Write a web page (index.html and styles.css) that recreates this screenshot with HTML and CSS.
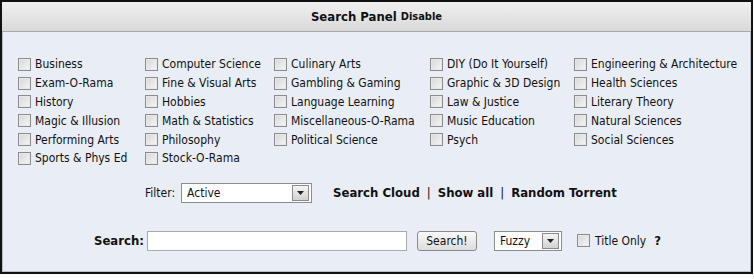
FILE: index.html
```html
<!DOCTYPE html>
<html>
<head>
<meta charset="utf-8">
<link rel="stylesheet" href="styles.css">
</head>
<body>
<div class="panel">
  <div class="panel-head"><span class="title">Search Panel</span> <span class="disable">Disable</span></div>
  <div class="panel-body">
    <div class="cats">
      <label class="cat"><span class="cb"></span>Business</label>
      <label class="cat"><span class="cb"></span>Computer Science</label>
      <label class="cat"><span class="cb"></span>Culinary Arts</label>
      <label class="cat"><span class="cb"></span>DIY (Do It Yourself)</label>
      <label class="cat"><span class="cb"></span>Engineering &amp; Architecture</label>
      <label class="cat"><span class="cb"></span>Exam-O-Rama</label>
      <label class="cat"><span class="cb"></span>Fine &amp; Visual Arts</label>
      <label class="cat"><span class="cb"></span>Gambling &amp; Gaming</label>
      <label class="cat"><span class="cb"></span>Graphic &amp; 3D Design</label>
      <label class="cat"><span class="cb"></span>Health Sciences</label>
      <label class="cat"><span class="cb"></span>History</label>
      <label class="cat"><span class="cb"></span>Hobbies</label>
      <label class="cat"><span class="cb"></span>Language Learning</label>
      <label class="cat"><span class="cb"></span>Law &amp; Justice</label>
      <label class="cat"><span class="cb"></span>Literary Theory</label>
      <label class="cat"><span class="cb"></span>Magic &amp; Illusion</label>
      <label class="cat"><span class="cb"></span>Math &amp; Statistics</label>
      <label class="cat"><span class="cb"></span>Miscellaneous-O-Rama</label>
      <label class="cat"><span class="cb"></span>Music Education</label>
      <label class="cat"><span class="cb"></span>Natural Sciences</label>
      <label class="cat"><span class="cb"></span>Performing Arts</label>
      <label class="cat"><span class="cb"></span>Philosophy</label>
      <label class="cat"><span class="cb"></span>Political Science</label>
      <label class="cat"><span class="cb"></span>Psych</label>
      <label class="cat"><span class="cb"></span>Social Sciences</label>
      <label class="cat"><span class="cb"></span>Sports &amp; Phys Ed</label>
      <label class="cat"><span class="cb"></span>Stock-O-Rama</label>
    </div>
    <div class="filter-row">
      <span class="lbl">Filter:</span>
      <span class="sel sel-filter"><span class="sel-text">Active</span><span class="sel-btn"><svg width="7" height="4" viewBox="0 0 7 4"><path d="M0 0h7L3.5 4z" fill="#222"/></svg></span></span>
      <span class="links"><b>Search Cloud</b><span class="sep">|</span><b>Show all</b><span class="sep">|</span><b>Random Torrent</b></span>
    </div>
    <div class="search-row">
      <b class="search-lbl">Search:</b>
      <span class="input"></span>
      <span class="btn">Search!</span>
      <span class="sel sel-fuzzy"><span class="sel-text">Fuzzy</span><span class="sel-btn"><svg width="7" height="4" viewBox="0 0 7 4"><path d="M0 0h7L3.5 4z" fill="#222"/></svg></span></span>
      <label class="title-only"><span class="cb"></span>Title Only</label>
      <b class="help">?</b>
    </div>
  </div>
</div>
</body>
</html>
```
FILE: styles.css
```css
html, body { margin: 0; padding: 0; background: #fff; }
body {
  font-family: Tahoma, "DejaVu Sans Condensed", "DejaVu Sans", sans-serif;
  font-size: 12px;
  color: #111;
}
.panel {
  width: 749px;
  height: 270px;
  border: 2px solid #111;
  background: #e9edf5;
  box-shadow: inset 1px 1px 0 #b8bcc4, inset -1px -1px 0 #b8bcc4;
}
.panel-head {
  height: 29px;
  border-bottom: 1px solid #a8a8a8;
  background: linear-gradient(#f0f0f0, #d9d9d9);
  display: flex;
  align-items: center;
  justify-content: center;
  gap: 4px;
  font-weight: bold;
}
.title { font-size: 13px; }
.disable { font-size: 11px; }
.panel-body { padding: 23px 0 0 16px; }
.cats {
  display: grid;
  grid-template-columns: 127px 129px 156px 144px 170px;
  grid-auto-rows: 18.8px;
}
.cat {
  display: flex;
  align-items: center;
  white-space: nowrap;
}
.cb {
  width: 11px;
  height: 11px;
  border: 1px solid #8c8c8c;
  background: linear-gradient(135deg, #d6d6d6, #f6f6f6);
  box-shadow: inset 0 0 0 1px #e8e8e8;
  margin-right: 4px;
  flex: none;
}
.filter-row {
  display: flex;
  align-items: center;
  margin: 15px 0 0 127px;
  height: 20px;
}
.lbl { margin-right: 6px; }
.sel {
  display: flex;
  align-items: center;
  height: 18px;
  border: 1px solid #8c8c8c;
  background: #fff;
  box-sizing: content-box;
}
.sel-text { flex: 1; padding-left: 5px; }
.sel-btn {
  width: 15px;
  height: 14px;
  margin-right: 2px;
  border: 1px solid #8a8a8a;
  background: linear-gradient(#f4f4f4, #d2d2d2);
  display: flex;
  align-items: center;
  justify-content: center;
}
.sel-filter { width: 129px; }
.links { margin-left: 21px; font-size: 13px; }
.sep { font-weight: normal; margin: 0 7px; }
.search-row {
  display: flex;
  align-items: center;
  margin: 27px 0 0 76px;
  height: 22px;
}
.search-lbl { font-size: 13px; margin-right: 3px; }
.input {
  width: 258px;
  height: 18px;
  border: 1px solid #a9a9a9;
  background: #fff;
}
.btn {
  margin-left: 10px;
  width: 58px;
  height: 18px;
  border: 1px solid #8a8a8a;
  border-radius: 3px;
  background: linear-gradient(#fafafa, #dcdcdc);
  display: flex;
  align-items: center;
  justify-content: center;
}
.sel-fuzzy { width: 66px; margin-left: 17px; }
.title-only { display: flex; align-items: center; margin-left: 15px; }
.title-only .cb { margin-right: 5px; }
.help { font-size: 13px; margin-left: 8px; }
```
